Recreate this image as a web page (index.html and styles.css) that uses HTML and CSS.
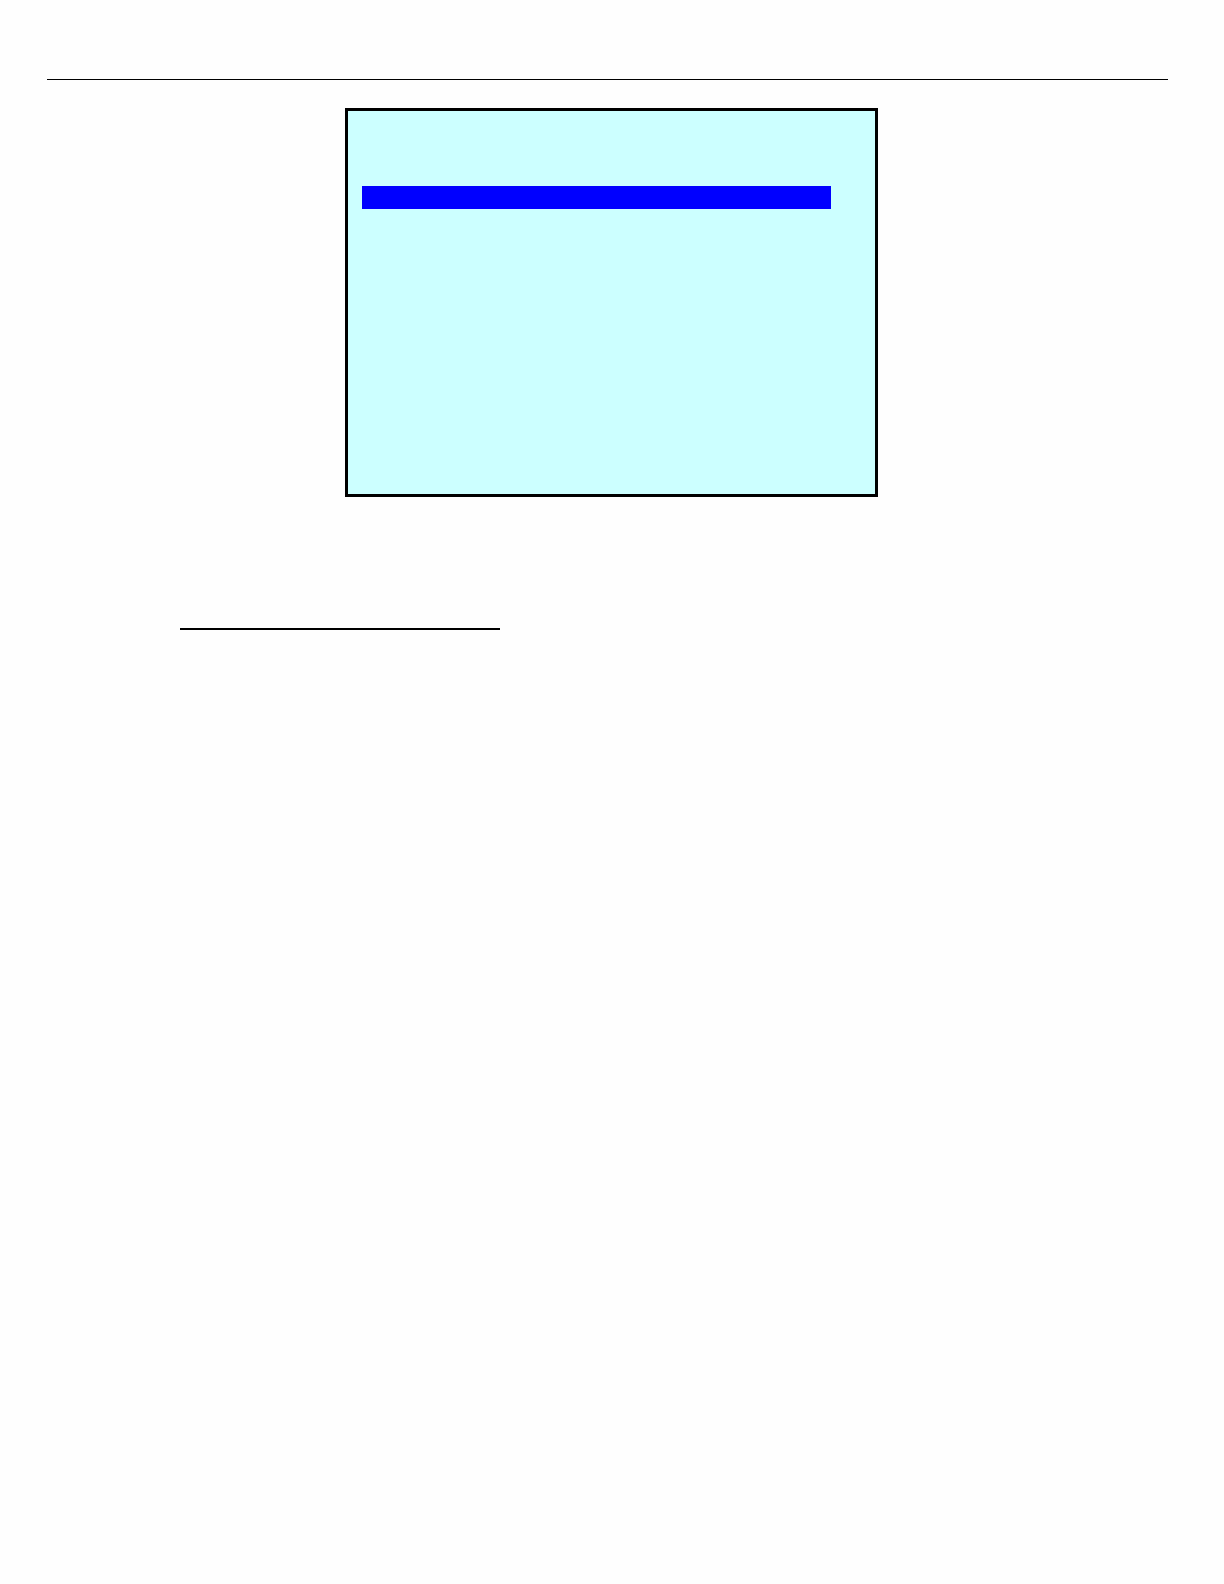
FILE: index.html
```html
<!DOCTYPE html>
<html lang="en">
<head>
  <meta charset="utf-8">
  <meta name="viewport" content="width=device-width, initial-scale=1">
  <title>Display</title>
  <link rel="stylesheet" href="styles.css">
</head>
<body>
  <main class="page">
    <hr class="page-rule">
    <section class="figure">
      <div class="screen">
        <div class="selected-row"></div>
      </div>
    </section>
    <hr class="section-rule">
  </main>
</body>
</html>
```

FILE: styles.css
```css
* {
  box-sizing: border-box;
}

body {
  margin: 0;
  min-height: 100vh;
  background: #fefefe;
  font-family: "Liberation Sans", Arial, sans-serif;
}

.page {
  display: flex;
  flex-direction: column;
  padding: 79px 56px 56px 47px;
}

.page-rule,
.section-rule {
  margin: 0;
  border: 0;
  background: #000;
}

.page-rule {
  height: 1px;
}

.figure {
  display: flex;
  justify-content: center;
  padding: 28px 0 0 8px;
}

.screen {
  width: 100%;
  max-width: 533px;
  min-height: 389px;
  padding: 75px 44px 75px 14px;
  border: 3px solid #000;
  background: #cff;
}

.selected-row {
  height: 23px;
  background: #00f;
}

.section-rule {
  width: 100%;
  max-width: 320px;
  height: 2px;
  margin: 131px 0 0 133px;
}
```
